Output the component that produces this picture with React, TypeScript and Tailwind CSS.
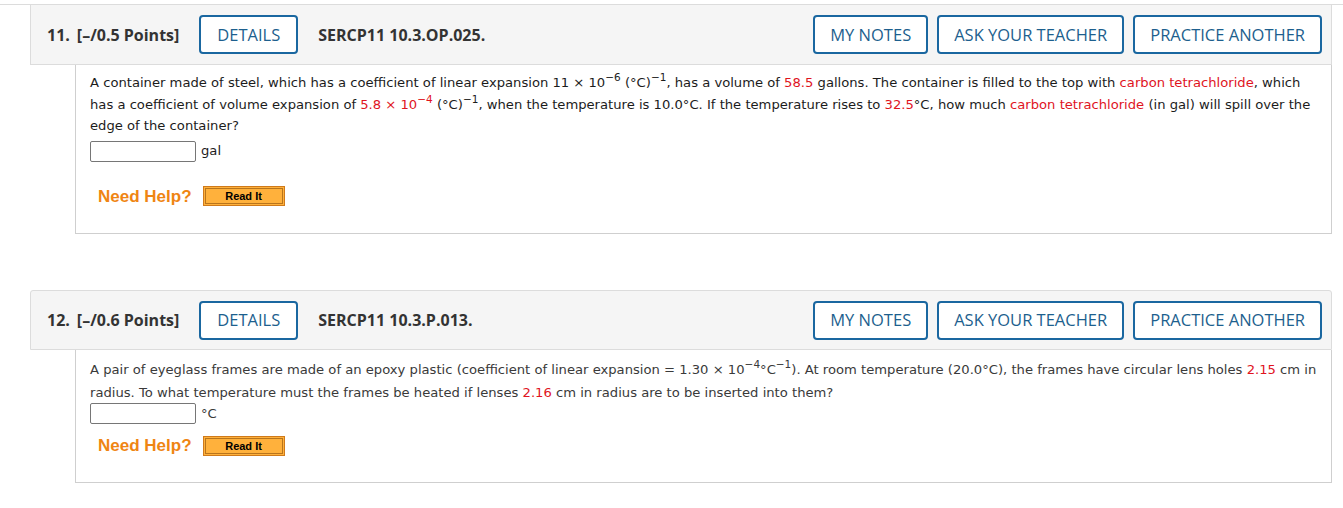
const red = "text-[#e0141e]";

function HeaderButton({ label, className }: { label: string; className?: string }) {
  return (
    <button
      className={
        "h-[39px] rounded-[4px] border-2 border-[#1a67a0] bg-white pt-[1px] text-[16.5px] text-[#1d5f8e] " +
        (className ?? "px-[15px]")
      }
    >
      {label}
    </button>
  );
}

function Header({ num, points, code, rounded }: { num: string; points: string; code: string; rounded?: boolean }) {
  return (
    <div
      className={
        "flex h-[60px] items-center border-x border-b border-[#dcdcdc] bg-[#f5f5f5] pl-[16px] pr-[9px] font-['Open_Sans',sans-serif] " +
        (rounded ? "rounded-t-[3px] border-t" : "")
      }
    >
      <span className="text-[16px] font-bold text-[#333]">{num}</span>
      <span className="ml-[7px] text-[16px] font-bold text-[#333]">{points}</span>
      <HeaderButton label="DETAILS" className="ml-[20px] px-[16px]" />
      <span className="ml-[20px] text-[16px] font-bold text-[#333]">{code}</span>
      <div className="ml-auto flex gap-[9px]">
        <HeaderButton label="MY NOTES" />
        <HeaderButton label="ASK YOUR TEACHER" />
        <HeaderButton label="PRACTICE ANOTHER" />
      </div>
    </div>
  );
}

function NeedHelp() {
  return (
    <div className="flex items-center pl-[8px] font-['Liberation_Sans',Arial,sans-serif]">
      <span className="text-[17px] font-bold text-[#ef8513]">Need Help?</span>
      <button className="ml-[11px] h-[20px] w-[82px] border border-[#d07a1a] bg-[#ffb13c] p-[1px]">
        <span className="flex h-full w-full items-center justify-center border border-[#b8741c] text-[11px] font-bold text-black">
          Read It
        </span>
      </button>
    </div>
  );
}

function Sup({ children }: { children: React.ReactNode }) {
  return <sup className="top-[-0.55em] text-[10.5px] leading-none">{children}</sup>;
}

export default function App() {
  return (
    <div className="h-[508px] w-full overflow-hidden bg-white">
      <div className="h-[4px]" />
      <div className="border-t border-[#dcdcdc]" />

      {/* question 11 */}
      <div className="ml-[30px] w-[1302px]">
        <Header num="11." points="[–/0.5 Points]" code="SERCP11 10.3.OP.025." />
        <div className="ml-[45px] h-[169px] border-x border-b border-[#cfcfcf] pl-[14px] pt-[7px] font-['DejaVu_Sans',Verdana,sans-serif] text-[13.15px] text-[#1c1c1c]">
          <p className="whitespace-nowrap leading-[21.5px]">
            A container made of steel, which has a coefficient of linear expansion 11 × 10<Sup>−6</Sup> (°C)<Sup>−1</Sup>,
            has a volume of <span className={red}>58.5</span> gallons. The container is filled to the top with{" "}
            <span className={red}>carbon tetrachloride</span>, which
            <br />
            has a coefficient of volume expansion of <span className={red}>5.8 × 10<Sup>−4</Sup></span> (°C)<Sup>−1</Sup>,
            when the temperature is 10.0°C. If the temperature rises to <span className={red}>32.5</span>°C, how much{" "}
            <span className={red}>carbon tetrachloride</span> (in gal) will spill over the
            <br />
            edge of the container?
          </p>
          <div className="mt-[4px] flex items-center">
            <input className="h-[21px] w-[106px] rounded-[2px] border border-[#767676] bg-white" />
            <span className="ml-[5px]">gal</span>
          </div>
          <div className="mt-[22px]">
            <NeedHelp />
          </div>
        </div>
      </div>

      {/* question 12 */}
      <div className="ml-[30px] mt-[56px] w-[1302px]">
        <Header num="12." points="[–/0.6 Points]" code="SERCP11 10.3.P.013." rounded />
        <div className="ml-[45px] h-[133px] border-x border-b border-[#cfcfcf] pl-[14px] pt-[8px] font-['DejaVu_Sans',Verdana,sans-serif] text-[13.15px] text-[#3a3a3a]">
          <p className="whitespace-nowrap leading-[23px]">
            A pair of eyeglass frames are made of an epoxy plastic (coefficient of linear expansion = 1.30 × 10
            <Sup>−4</Sup>°C<Sup>−1</Sup>). At room temperature (20.0°C), the frames have circular lens holes{" "}
            <span className={red}>2.15</span> cm in
            <br />
            radius. To what temperature must the frames be heated if lenses <span className={red}>2.16</span> cm in
            radius are to be inserted into them?
          </p>
          <div className="mt-[-1px] flex items-center">
            <input className="h-[21px] w-[106px] rounded-[2px] border border-[#767676] bg-white" />
            <span className="ml-[5px]">°C</span>
          </div>
          <div className="mt-[9px]">
            <NeedHelp />
          </div>
        </div>
      </div>
    </div>
  );
}
